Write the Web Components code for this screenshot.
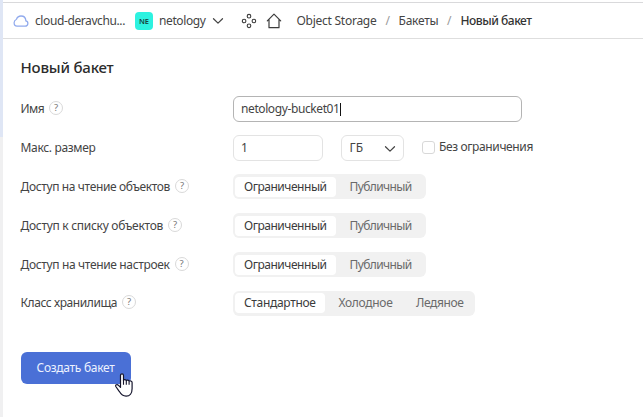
<!DOCTYPE html>
<html lang="ru">
<head>
<meta charset="utf-8">
<title>Новый бакет</title>
<style>
html,body{margin:0;height:100%;overflow:hidden;background:#fff}
body{font:12px/18px "Noto Sans","Open Sans",sans-serif;color:#444}
</style>
</head>
<body>
<bucket-page></bucket-page>
<script>
const define=(name,html,init)=>{
  const t=document.createElement('template');t.innerHTML=html;
  customElements.define(name,class extends HTMLElement{
    constructor(){super();this.attachShadow({mode:'open'}).append(t.content.cloneNode(true));}
    connectedCallback(){if(init)init.call(this,this.shadowRoot);}
  });
};

/* One line of text, tracked to the width given in "w" */
define('ui-text','<style>:host{display:block;flex:none;white-space:pre}span{display:inline-block}</style><span><slot></slot></span>',function(r){
  const s=r.querySelector('span'),w=+this.getAttribute('w');
  this.style.width=w+'px';
  const n=this.textContent.length;
  s.style.letterSpacing=((w-s.getBoundingClientRect().width)/n)+'px';
});

define('ui-help',`<style>:host{display:flex;flex:none;box-sizing:border-box;width:14px;height:14px;border:1px solid #d9d9d9;border-radius:50%;align-items:center;justify-content:center;font-size:9.5px;line-height:12px;color:#777;position:relative;top:-1px}</style>?`);

define('ui-chevron',`<style>:host{display:block;flex:none;width:12px;height:8px}svg{display:block}</style>
<svg width="12" height="8" viewBox="0 0 12 8" fill="none" stroke="#444" stroke-width="1.25" stroke-linecap="round" stroke-linejoin="round"><path d="M1.5 1.7 6 6.1l4.5-4.4"/></svg>`);

define('ui-row',`<style>:host{display:grid;grid-template-columns:212px 1fr;height:38.8px;align-items:center}
.l{display:flex;align-items:center;gap:5px}.c{display:flex;align-items:center}</style>
<div class="l"><slot name="label"></slot></div><div class="c"><slot></slot></div>`);

define('ui-field',`<style>:host{display:flex;align-items:center;box-sizing:border-box;height:26px;border:1px solid #e3e3e3;border-radius:6px;padding:0 7px 0 7.5px}
:host([focused]){border-color:#b4b4b4}
i{display:none;width:1px;height:13px;background:#111}:host([focused]) i{display:block}</style><slot></slot><i></i>`);

define('ui-segments',`<style>:host{display:flex;box-sizing:border-box;height:25px;padding:2.5px;background:#f1f1f1;border-radius:6px;color:#6a6a6a}
::slotted(ui-text){padding:0 12px 0 11.5px;line-height:20px;border-radius:4px}
::slotted(ui-text[selected]){padding:0 9px;background:#fff;color:#3b3b3b}</style><slot></slot>`);

define('ui-checkbox',`<style>:host{display:flex;align-items:center;gap:4px;position:relative;top:-1px}i{box-sizing:border-box;width:13px;height:13px;border:1px solid #d8d8d8;border-radius:3px}</style><i></i><slot></slot>`);

define('ui-button',`<style>:host{display:flex;box-sizing:border-box;width:110px;height:32px;border-radius:6px;background:#4a70d6;color:#edf2ff;align-items:center;padding-left:16px}</style><slot></slot>`);

define('ui-cursor',`<style>:host{position:absolute;left:114px;top:372px;width:19px;height:26px}svg{display:block}</style>
<svg width="19" height="26" viewBox="0 0 19 26"><path d="M6.5 15.3V3.4c0-2.1 3-2.1 3 0v5c.3-1 2.5-1 2.8.2.6-.9 2.5-.6 2.8.6.8-.8 3-.3 3 1.3v6c0 4.9-2.2 7.7-6 7.7-3.4 0-4.9-1.5-6.9-4.9l-3.4-4.8c-.8-1.9 1.5-2.4 2.7-1.2Z" fill="#fff" stroke="#14142c" stroke-width="1.2" stroke-linejoin="round"/><path d="M9.5 8v4.7M12.3 8.6v4.1M15.1 9.2v3.5" stroke="#14142c" fill="none" stroke-width="1.1"/></svg>`);

define('top-bar',`<style>:host{display:flex;box-sizing:border-box;height:37px;border-top:1px solid #d9d9db;border-bottom:1px solid #dedede;align-items:center;padding-left:10px}
svg{display:block;flex:none}.ne{width:18px;height:18px;border-radius:4px;background:#2df2e0;color:#173f3d;display:flex;align-items:center;justify-content:center;font-size:7.5px;font-weight:600;margin:0 6px 0 10px}
.s{color:#999}b{font-weight:500;color:#333}</style>
<svg width="16" height="14" viewBox="0 0 16 14" fill="none" stroke="#91aaed" stroke-width="1.25"><path d="M4 12.2h8.1a2.7 2.7 0 0 0 .8-5.3C12.7 4.1 10.7 2 8 2 5.9 2 4.2 3.2 3.5 5.2 2.1 5.8 1.1 7 1.1 8.8c0 2 1.2 3.4 2.9 3.4Z"/></svg>
<ui-text w="90" style="margin-left:6px">cloud-deravchu...</ui-text>
<div class="ne">NE</div>
<ui-text w="46.5">netology</ui-text>
<ui-chevron style="margin:1px 0 0 6.5px"></ui-chevron>
<svg style="margin-left:16.5px" width="16" height="16" viewBox="0 0 16 16" fill="none" stroke="#3c3c3c" stroke-width="1.1"><circle cx="8" cy="3.2" r="1.8"/><circle cx="3.1" cy="8" r="1.8"/><circle cx="12.9" cy="8" r="1.8"/><circle cx="8" cy="12.8" r="1.8"/></svg>
<svg style="margin-left:9px" width="16" height="16" viewBox="0 0 16 16" fill="none" stroke="#3c3c3c" stroke-width="1.2" stroke-linejoin="round" stroke-linecap="round"><path d="M1.3 7.9 8 1.2l6.7 6.7M3 6.4v8.3h10V6.4"/></svg>
<ui-text w="80" style="margin-left:15px">Object Storage</ui-text>
<ui-text class="s" w="5" style="margin-left:9px">/</ui-text>
<ui-text w="40" style="margin-left:8px">Бакеты</ui-text>
<ui-text class="s" w="5" style="margin-left:8.5px">/</ui-text>
<b style="margin-left:8.5px"><ui-text w="71">Новый бакет</ui-text></b>`);

define('bucket-page',`<style>:host{display:grid;grid-template-columns:3px 1fr;width:643px;height:417px;position:relative}
.rail{background:linear-gradient(#dfe6f5 137px,#f0f0f1 137px)}
main{padding-top:2px}
section{padding-left:17.5px}
h1{margin:18px 0 13px;font-size:15px;line-height:20px;font-weight:500;color:#2c2c2c}
ui-row ui-text{flex:none}ui-button{margin-top:29px}</style>
<div class="rail"></div>
<main><top-bar></top-bar><section>
<h1><ui-text w="93">Новый бакет</ui-text></h1>
<ui-row><ui-text slot="label" w="23.5">Имя</ui-text><ui-help slot="label"></ui-help><ui-field focused style="width:289px"><ui-text w="98.5">netology-bucket01</ui-text></ui-field></ui-row>
<ui-row><ui-text slot="label" w="75">Макс. размер</ui-text><ui-field style="width:90.5px"><ui-text w="6">1</ui-text></ui-field><ui-field style="width:63px;margin-left:18px"><ui-text w="14">ГБ</ui-text><ui-chevron style="margin:1px 0 0 20px"></ui-chevron></ui-field><ui-checkbox style="margin-left:18px"><ui-text w="94">Без ограничения</ui-text></ui-checkbox></ui-row>
<ui-row><ui-text slot="label" w="149.5">Доступ на чтение объектов</ui-text><ui-help slot="label"></ui-help><ui-segments><ui-text selected w="82.5">Ограниченный</ui-text><ui-text style="padding-left:14px" w="62">Публичный</ui-text></ui-segments></ui-row>
<ui-row><ui-text slot="label" w="142.5">Доступ к списку объектов</ui-text><ui-help slot="label"></ui-help><ui-segments><ui-text selected w="82.5">Ограниченный</ui-text><ui-text style="padding-left:14px" w="62">Публичный</ui-text></ui-segments></ui-row>
<ui-row><ui-text slot="label" w="149">Доступ на чтение настроек</ui-text><ui-help slot="label"></ui-help><ui-segments><ui-text selected w="82.5">Ограниченный</ui-text><ui-text style="padding-left:14px" w="62">Публичный</ui-text></ui-segments></ui-row>
<ui-row><ui-text slot="label" w="96.5">Класс хранилища</ui-text><ui-help slot="label"></ui-help><ui-segments><ui-text selected w="71.5">Стандартное</ui-text><ui-text style="padding-left:14px" w="54">Холодное</ui-text><ui-text w="47.5" style="padding-right:9px">Ледяное</ui-text></ui-segments></ui-row>
<ui-button><ui-text w="78">Создать бакет</ui-text></ui-button>
</section></main><ui-cursor></ui-cursor>`);
</script>
</body>
</html>
